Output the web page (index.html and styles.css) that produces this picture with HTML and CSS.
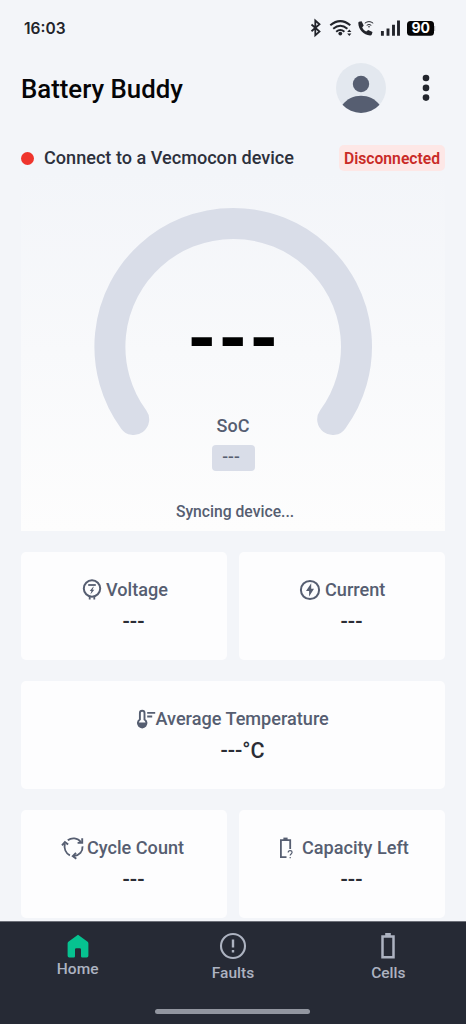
FILE: index.html
```html
<!DOCTYPE html>
<html lang="en">
<head>
<meta charset="utf-8">
<title>Battery Buddy</title>
<link rel="stylesheet" href="styles.css">
</head>
<body>
<div class="screen">
  <div class="status-bar">
    <span class="clock">16:03</span>
    <svg class="status-icons" width="130" height="24" viewBox="306 16 130 24" fill="none">
      <path d="M311.500 24.500l8 7-4.200 3.800V20.500l4.200 3.800-8 7" stroke="#22242b" stroke-width="1.800"/>
      <g stroke="#22242b" stroke-width="2">
        <path d="M330.300 25.300q10-8.400 20 0"/><path d="M333.200 28.700q7.100-6 14.200 0"/><path d="M336.200 31.700q4.100-3.400 8.200 0"/>
      </g>
      <circle cx="340.300" cy="33.600" r="1.900" fill="#22242b"/>
      <path d="M347.200 32l2.100-2.500 2.100 2.500zM347.200 33.500h4.200l-2.100 2.400z" fill="#22242b"/>
      <path d="M359 21.700l2.600-.5 2.100 4.300-1.500 2c1 2 2.200 3 4 4l2-1.600 4.300 2.100-.7 2.600q-.4.900-1.700.9C363.500 35 358.500 29.500 358.300 23q0-.8.700-1.300z" fill="#22242b"/>
      <path d="M364.800 23.200q4.200-3.200 8.400 0M366.700 25.300q2.300-1.700 4.600 0" stroke="#22242b" stroke-width="1"/>
      <circle cx="369" cy="26.800" r=".8" fill="#22242b"/>
      <path d="M382.400 31v4.800M388 28.500v7.300M393.500 24.800v11M398.500 20.500v15.300" stroke="#22242b" stroke-width="2.900"/>
      <rect x="407" y="21" width="27" height="14.800" rx="3.500" fill="#050506"/>
      <path d="M434.600 26v5" stroke="#b5b7bd" stroke-width="1.200"/>
      <text class="battery-level" x="420.700" y="33.300">90</text>
    </svg>
  </div>

  <header class="app-header">
    <h1 class="title">Battery Buddy</h1>
    <svg class="avatar" width="50" height="50" viewBox="0 0 50 50">
      <circle cx="25" cy="25" r="25" fill="#e3e8ef"/>
      <circle cx="25" cy="21" r="8.200" fill="#565e71"/>
      <path d="M6.500 41.800C15 29.600 35 29.600 43.500 41.800A25 25 0 0 1 6.500 41.800z" fill="#565e71"/>
    </svg>
    <svg class="menu" width="8" height="30" viewBox="0 0 8 30" fill="#22252d">
      <circle cx="4" cy="5" r="3.300"/><circle cx="4" cy="14.900" r="3.300"/><circle cx="4" cy="24.600" r="3.300"/>
    </svg>
  </header>

  <section class="connection">
    <span class="dot"></span>
    <span class="device">Connect to a Vecmocon device</span>
    <span class="state">Disconnected</span>
  </section>

  <section class="gauge-card">
    <div class="gauge">
      <svg width="280" height="230" viewBox="93 206 280 230">
        <path d="M133.700 419.500A123.300 123.300 0 1 1 332.700 419.500" fill="none" stroke="#d9dde8" stroke-width="31" stroke-linecap="round"/>
      </svg>
      <div class="soc-value">---</div>
    </div>
    <div class="soc-label">SoC</div>
    <div class="soc-badge">---</div>
    <div class="sync">Syncing device...</div>
  </section>

  <main class="cards">
    <article class="card">
      <div class="card-head voltage">
        <svg width="20" height="24" viewBox="0 0 20 24" fill="none" stroke="#565e71">
          <circle cx="10" cy="10.500" r="8.200" stroke-width="2"/>
          <path d="M6.200 7h7.600" stroke-width="1.800"/>
          <path d="M11.200 8.800l-3.500 4.200h1.700L8.400 16.500l3.900-4.700h-1.800l1.300-3z" fill="#565e71" stroke="none"/>
          <path d="M7.700 18v3.500M12.300 18v3.500" stroke-width="1.800"/>
        </svg>
        <span>Voltage</span>
      </div>
      <div class="value">---</div>
    </article>
    <article class="card">
      <div class="card-head current">
        <svg width="22" height="22" viewBox="0 0 22 22">
          <circle cx="11" cy="11" r="9.100" fill="none" stroke="#565e71" stroke-width="2"/>
          <path d="M12.200 4.200L7 12h3.100v5.600L15 9.700h-2.800z" fill="#565e71"/>
        </svg>
        <span>Current</span>
      </div>
      <div class="value">---</div>
    </article>
    <article class="card wide">
      <div class="card-head temperature">
        <svg width="20" height="20" viewBox="0 0 20 20" fill="none" stroke="#565e71" stroke-width="1.900">
          <path d="M3.900 10.500V4a2.300 2.300 0 0 1 4.600 0v6.500a4.300 4.300 0 1 1-4.600 0z"/>
          <path d="M1.500 13.500h9.400a4.700 4.700 0 1 1-9.400 0z" fill="#565e71" stroke="none"/>
          <path d="M11.200 3.900h8M11.200 7.500h5"/>
        </svg>
        <span>Average Temperature</span>
      </div>
      <div class="value">---°C</div>
    </article>
    <article class="card">
      <div class="card-head cycle">
        <svg width="24" height="24" viewBox="0 0 24 24" fill="none" stroke="#565e71" stroke-width="1.900">
          <path d="M6.800 4.200C10.500 1.500 16.500 1.500 20 6.200"/><path d="M21.200 2.300v4.600h-4.600"/>
          <path d="M21.500 10.300c.4 5-3 8.900-9 9.800"/><path d="M15 16.900l-3.200 3.200 3.500 2.600"/>
          <path d="M8.900 19.300C4.700 17.300 2.800 12.400 3.800 7.500"/><path d="M1 9.300l2.900-3.300 3.200 2.600"/>
        </svg>
        <span>Cycle Count</span>
      </div>
      <div class="value">---</div>
    </article>
    <article class="card">
      <div class="card-head capacity">
        <svg width="15" height="24" viewBox="0 0 15 24" fill="none">
          <path d="M7.500 21.100H1.900V4.100h9.300v8.800" stroke="#565e71" stroke-width="1.800"/>
          <path d="M4.400 1.600h4.200v2.400H4.400z" fill="#565e71"/>
          <path d="M9.200 16.500c0-2.700 3.900-2.500 3.900-.2 0 1.700-1.900 1.600-1.900 3.200M11.200 20.900v1.300" stroke="#565e71" stroke-width="1.200"/>
        </svg>
        <span>Capacity Left</span>
      </div>
      <div class="value">---</div>
    </article>
  </main>

  <nav class="tabs">
    <div class="tab home">
      <svg width="22" height="24" viewBox="0 0 22 24"><path d="M11 .8L1.700 7.500Q.6 8.200.6 9.500v12.300q0 1.700 1.700 1.700h4.500q1.200 0 1.200-1.200v-6.800q0-1.300 1.300-1.300h3.400q1.300 0 1.300 1.300v6.800q0 1.200 1.200 1.200h4.500q1.700 0 1.700-1.700V9.500q0-1.300-1.100-2z" fill="#06c290"/></svg>
      <span>Home</span>
    </div>
    <div class="tab">
      <svg width="28" height="28" viewBox="0 0 28 28" fill="none" stroke="#adb3c1"><circle cx="14" cy="14" r="12" stroke-width="2.100"/><path d="M14 7.500v8M14 18v2.400" stroke-width="2.400"/></svg>
      <span>Faults</span>
    </div>
    <div class="tab">
      <svg width="16" height="28" viewBox="0 0 16 28"><path d="M2.500 4.500h11v20.800h-11z" fill="none" stroke="#adb3c1" stroke-width="2.500"/><path d="M5.200 1h5.600v3H5.200z" fill="#adb3c1"/></svg>
      <span>Cells</span>
    </div>
    <div class="home-indicator"></div>
  </nav>
</div>
</body>
</html>
```
FILE: styles.css
```css
* { box-sizing: border-box; }
body { margin: 0; background: #f3f5f9; font-family: Roboto, "Liberation Sans", sans-serif; }
.screen { width: 466px; height: 1024px; display: flex; flex-direction: column; overflow: hidden; }
.status-bar { height: 56px; padding: 16px 30px 0 24px; display: flex; justify-content: space-between; align-items: flex-start; }
.clock { font: 600 15.500px/25px Inter, sans-serif; color: #22242b; }
.battery-level { font: 700 14px Inter, sans-serif; fill: #fff; text-anchor: middle; }
.app-header { height: 64px; padding: 0 36px 0 21px; display: flex; align-items: center; }
.title { margin: 2px auto 0 0; font-size: 25.800px; line-height: 32px; font-weight: 500; color: #050507; }
.menu { margin-left: 36px; }
.connection { height: 52px; padding: 24px 21px 0; display: flex; align-items: center; flex: none; }
.dot { width: 13px; height: 13px; border-radius: 50%; background: #ef352d; margin-right: 10px; }
.device { font-size: 18.100px; line-height: 24px; font-weight: 500; color: #2c303c; margin-right: auto; }
.state { width: 106px; height: 26px; border-radius: 5px; background: #fde7e6; color: #c92b27; font-size: 15.700px; line-height: 27px; font-weight: 600; text-align: center; }
.gauge-card { height: 359px; margin: 0 21px; flex: none; display: flex; flex-direction: column; align-items: center; background: linear-gradient(#f3f5f9, #fdfdfd); color: #565e71; }
.gauge { display: grid; margin-top: 34px; height: 209px; flex: none; }
.gauge > * { grid-area: 1 / 1; }
.soc-value { justify-self: center; color: #000; font-size: 69px; line-height: 64px; font-weight: 900; margin-top: 102px; }
.soc-label { font-size: 18px; line-height: 22px; font-weight: 500; }
.soc-badge { width: 43px; height: 26px; margin-top: 8px; padding-right: 4px; border-radius: 4px; background: #d9dde8; font-size: 17px; line-height: 23px; font-weight: 500; text-align: center; }
.sync { margin: 30px 0 0 4px; font-size: 15.700px; line-height: 22px; font-weight: 500; }
.cards { margin: 21px 21px 0; display: grid; grid-template-columns: 206px 206px; column-gap: 12px; row-gap: 21px; grid-auto-rows: 108px; height: 369px; flex: none; }
.card { border-radius: 5px; background: #fdfdfe; padding-top: 25.500px; color: #565e71; }
.wide { grid-column: 1 / 3; }
.card-head { height: 24px; display: flex; align-items: center; font-size: 18.100px; font-weight: 500; white-space: nowrap; }
.voltage { padding-left: 61px; gap: 4px; }
.current { padding-left: 60px; gap: 4px; }
.temperature { padding-left: 115px; }
.temperature span { margin-left: -0.500px; }
.cycle { padding-left: 40px; gap: 2px; }
.capacity { padding-left: 40px; gap: 8px; }
.value { padding-left: 19px; margin-top: 8px; text-align: center; color: #2b2d35; font-size: 21.500px; line-height: 24px; font-weight: 500; }
.wide .value { padding-left: 19px; }
.tabs { height: 103px; flex: none; border-top: 1px solid #6d7079; background: #262a35; display: grid; grid-template-columns: repeat(3, 1fr); align-content: start; justify-items: center; color: #adb3c1; padding-top: 10px; }
.tab { height: 74px; display: flex; flex-direction: column; align-items: center; gap: 3px; font-size: 15.500px; line-height: 20px; font-weight: 500; }
.home { padding-top: 2px; gap: 1px; }
.home-indicator { grid-column: 1 / 4; width: 155px; height: 5px; margin-top: 3px; border-radius: 3px; background: #9296a0; }
```
